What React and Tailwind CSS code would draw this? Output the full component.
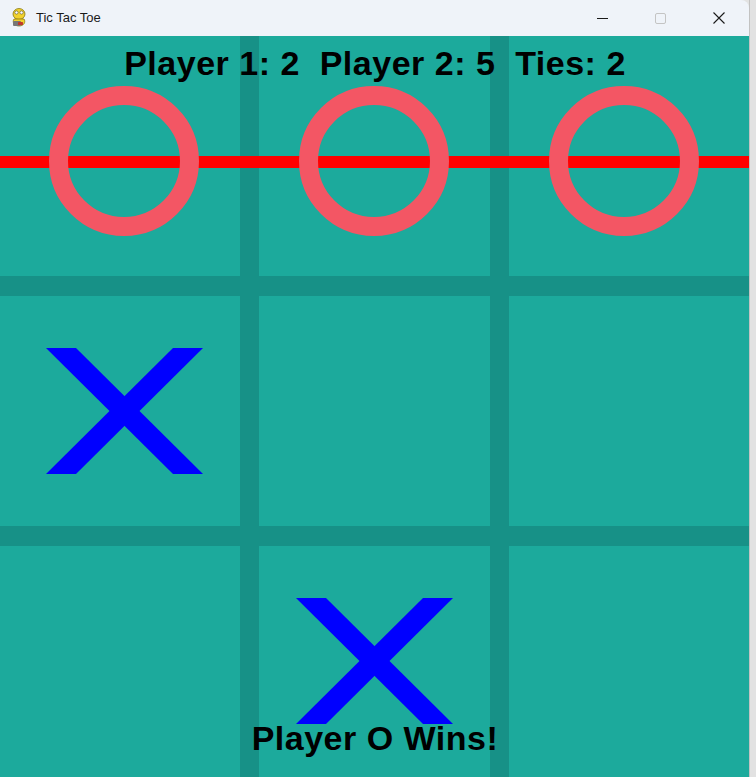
import { useState } from "react";

// Board marks: "o" circle, "x" cross, null empty
const initialBoard = [
  ["o", "o", "o"],
  ["x", null, null],
  [null, "x", null],
];

function SnakeIcon() {
  return (
    <svg width="20" height="22" viewBox="0 0 20 22">
      <ellipse cx="10" cy="7" rx="6" ry="5.5" fill="#f2d22e" stroke="#8a7a12" strokeWidth="0.8" />
      <circle cx="7.5" cy="5.5" r="1.6" fill="#fff" stroke="#333" strokeWidth="0.5" />
      <circle cx="12.5" cy="5.5" r="1.6" fill="#fff" stroke="#333" strokeWidth="0.5" />
      <path d="M5 12 C3 15 5 19 10 19 C15 19 17 15 15 12 Z" fill="#f2d22e" stroke="#8a7a12" strokeWidth="0.8" />
      <rect x="4" y="14" width="8" height="5" rx="1" fill="#777" />
      <rect x="9" y="15" width="5" height="3" rx="0.5" fill="#c0392b" />
    </svg>
  );
}

function TitleBar() {
  return (
    <div className="h-[36px] flex items-center bg-[#eff3f9] rounded-tr-[8px]">
      <div className="w-[36px] flex justify-center pl-[2px]">
        <SnakeIcon />
      </div>
      <span className="text-[13px] text-[#1a1a1a] font-['Liberation_Sans',sans-serif]">
        Tic Tac Toe
      </span>
      <div className="ml-auto flex items-center h-full">
        <div className="w-[58px] h-full flex items-center justify-center">
          <div className="w-[11px] h-px bg-[#1a1a1a]" />
        </div>
        <div className="w-[58px] h-full flex items-center justify-center">
          <div className="w-[11px] h-[11px] border border-[#c4c4c4] rounded-[2px]" />
        </div>
        <div className="w-[60px] h-full flex items-center justify-center">
          <svg width="12" height="12" viewBox="0 0 12 12">
            <path d="M0.5 0.5 L11.5 11.5 M11.5 0.5 L0.5 11.5" stroke="#1a1a1a" strokeWidth="1.1" />
          </svg>
        </div>
      </div>
    </div>
  );
}

// Marks are drawn on a 750x750 canvas, same as the game surface
function Marks({ board }) {
  const items = [];
  board.forEach((row, r) =>
    row.forEach((cell, c) => {
      const cx = c * 250 + 124;
      const cy = r * 250 + 125;
      if (cell === "o") {
        items.push(
          <circle key={`${r}-${c}`} cx={cx} cy={cy} r={65.5} fill="none" stroke="#f35664" strokeWidth="19" />
        );
      } else if (cell === "x") {
        const l = cx - 78;
        const rt = cx + 79;
        const t = cy - 63;
        const b = cy + 63;
        items.push(
          <g key={`${r}-${c}`} fill="#0000ff">
            <polygon points={`${l},${t} ${l + 30},${t} ${rt},${b} ${rt - 30},${b}`} />
            <polygon points={`${rt - 30},${t} ${rt},${t} ${l + 30},${b} ${l},${b}`} />
          </g>
        );
      }
    })
  );
  return (
    <svg className="absolute left-0 top-0" width="750" height="750" viewBox="0 0 750 750">
      <rect x="0" y="120" width="750" height="12" fill="#ff0000" />
      {items}
    </svg>
  );
}

export default function App() {
  const [board] = useState(initialBoard);
  const [scores] = useState({ p1: 2, p2: 5, ties: 2 });

  return (
    <div className="w-[756px] h-[777px] overflow-hidden flex bg-[#e2e2e2]">
      <div className="w-[750px] shrink-0 flex flex-col border-r border-[#c2c2c2]">
        <TitleBar />
        <div className="relative w-[749px] h-[741px] overflow-hidden">
          {/* grid: the dark gaps are the board lines */}
          <div className="w-[750px] h-[750px] grid grid-cols-[240px_231px_240px] grid-rows-[240px_230px_240px] gap-x-[19px] gap-y-[20px] bg-[#179187]">
            {Array.from({ length: 9 }).map((_, i) => (
              <div key={i} className="bg-[#1caa9c]" />
            ))}
          </div>
          <Marks board={board} />
          <div className="absolute left-0 top-[10px] w-[750px] text-center text-[34px] leading-[34px] font-bold tracking-[0.5px] text-black whitespace-pre font-['Liberation_Sans',Arial,sans-serif]">
            {`Player 1: ${scores.p1}  Player 2: ${scores.p2}  Ties: ${scores.ties}`}
          </div>
          <div className="absolute left-0 top-[685px] w-[750px] text-center text-[34px] leading-[34px] font-bold tracking-[0.5px] text-black whitespace-pre font-['Liberation_Sans',Arial,sans-serif]">
            Player O Wins!
          </div>
        </div>
      </div>
    </div>
  );
}
